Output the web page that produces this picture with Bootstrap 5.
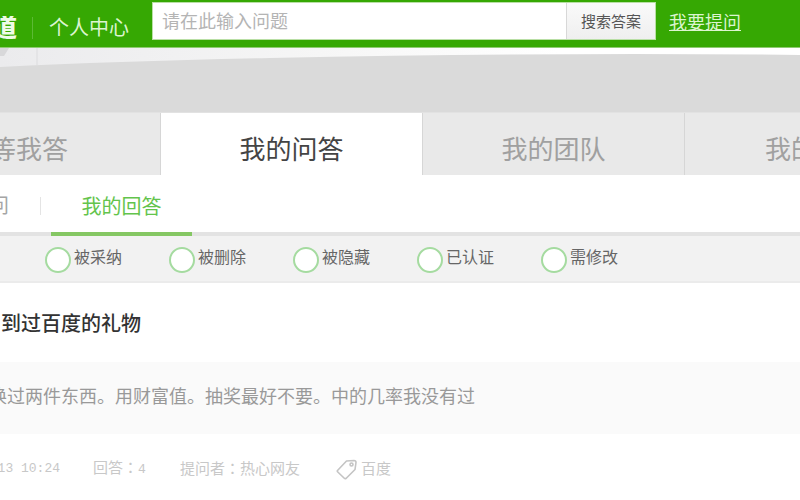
<!DOCTYPE html>
<html lang="zh-CN">
<head>
<meta charset="utf-8">
<meta name="viewport" content="width=device-width, initial-scale=1">
<title>个人中心</title>
<link href="https://cdn.jsdelivr.net/npm/bootstrap@5.3.0/dist/css/bootstrap.min.css" rel="stylesheet">
<style>
body { font-family: "Liberation Sans", "Noto Sans CJK SC", sans-serif; font-size: 16px; line-height: 24px; color: #333; overflow-x: hidden; }
.topbar { background: #36a803; height: 48px; border-bottom: 1px solid #8fcb72; }
.clip-start { display: flex; justify-content: flex-end; overflow: hidden; white-space: nowrap; flex: none; }
.brand-text { width: 17px; font-size: 24px; font-weight: 900; color: #effbe8; }
.brand-rule { width: 1px; height: 22px; background: #5cba35; margin: 0 16px 0 15px; }
.center-link { font-size: 20px; color: #dcf5cf; width: 103px; }
.title-group { padding-top: 8px; }
.search-group { width: 504px; height: 38px; flex: none; margin-top: 2px; border: 1px solid #b9dfa5; }
.search-group .form-control { font-size: 18px; line-height: 24px; padding: 2px 10px 0 9px; border: 0; }
.search-group .form-control::placeholder { color: #b4b4b4; }
.search-group .btn { width: 89px; font-size: 15px; line-height: 24px; padding: 2px 0 0; color: #555; border: 0; border-left: 1px solid #d8d8d8; background: linear-gradient(#fafafa, #efefef); }
.ask-link { font-size: 18px; color: #dcf5cf; margin: 11px 0 0 13px; }
.banner { height: 64px; background: #dadada; }
.banner svg { height: 20px; }
.main-tabs { height: 63px; background: #e9e9e9; border-top: 1px solid #e2e2e2; flex-wrap: nowrap; overflow: hidden; }
.main-tabs .nav-link { display: flex; align-items: center; justify-content: center; height: 63px; width: 262px; padding: 10px 0 0; font-size: 26px; line-height: 32px; color: #a0a0a0; border-right: 1px solid #d6d6d6; white-space: nowrap; }
.main-tabs .tab-first { width: 161px; justify-content: flex-end; padding-right: 92px; overflow: hidden; }
.main-tabs .tab-last { justify-content: flex-start; padding-left: 80px; border-right: 0; }
.main-tabs .active { background: #fff; color: #444; }
.sub-tabs { height: 61px; border-bottom: 4px solid #e3e3e3; padding-top: 4px; font-size: 20px; line-height: 24px; }
.sub-tabs a { color: #a5a5a5; text-decoration: none; }
.sub-first { width: 9px; }
.sub-rule { width: 1px; height: 18px; background: #e4e4e4; margin: 0 10px 0 31px; }
.sub-tabs .sub-current { color: #63c44c; width: 141px; height: 57px; line-height: 56px; text-align: center; border-bottom: 4px solid #85c763; align-self: flex-end; margin-bottom: -4px; }
.filters { height: 47px; background: #f2f2f2; border-bottom: 2px solid #ebebeb; padding-left: 45px; }
.filters .choice { display: flex; align-items: center; width: 124px; }
.filters .form-check-input { width: 26px; height: 26px; margin: 2px 3px 0 0; border: 2px solid #a5dba0; flex: none; }
.filters label { color: #666; font-size: 16px; white-space: nowrap; padding-bottom: 2px; }
.question-title { font-size: 20px; line-height: 28px; color: #333; padding: 27px 0 24px; margin: 0; }
.answer-box { background: #fafafa; color: #999; font-size: 18px; line-height: 24px; padding: 23px 0 25px; }
.clip-title { width: 141px; }
.clip-answer { width: 475px; }
.meta { color: #c8c8c8; font-size: 15px; line-height: 24px; padding-top: 22px; }
.meta-colon { font-family: "Noto Sans CJK TC", sans-serif; line-height: 1; }
.meta-num { font-family: "Liberation Mono", monospace; font-size: 13px; }
.meta-time { width: 60px; margin-right: 33px; }
.meta-count { width: 87px; }
.meta-user { width: 156px; }
.meta a { color: inherit; }
</style>
<script src="https://cdn.jsdelivr.net/npm/bootstrap@5.3.0/dist/js/bootstrap.bundle.min.js"></script>
</head>
<body class="bg-white">
<header class="topbar d-flex align-items-start">
  <div class="title-group d-flex align-items-center flex-shrink-0">
    <span class="clip-start brand-text">道</span>
    <span class="brand-rule"></span>
    <a href="#" class="center-link text-decoration-none py-2">个人中心</a>
  </div>
  <form class="search-group d-flex">
    <input type="text" class="form-control rounded-0 shadow-none" placeholder="请在此输入问题" aria-label="请在此输入问题">
    <button type="button" class="btn rounded-0 flex-shrink-0">搜索答案</button>
  </form>
  <a href="#" class="ask-link text-nowrap">我要提问</a>
</header>

<div class="banner">
  <svg class="w-100 d-block" viewBox="0 0 800 20" preserveAspectRatio="none" aria-hidden="true">
    <defs><linearGradient id="sky"><stop offset="0" stop-color="#ebebed"/><stop offset=".4" stop-color="#f6f6f6"/><stop offset=".7" stop-color="#fff"/></linearGradient></defs>
    <path d="M0 0H800V7Q560 4 270 10Q120 13 0 19Z" fill="url(#sky)"/>
    <path d="M0 0H9L4 8H0Z" fill="#d8d8da"/>
    <path d="M37 0V17" stroke="#dcdcde"/>
  </svg>
</div>

<nav class="nav main-tabs">
  <a href="#" class="nav-link tab-first flex-shrink-0">等我答</a>
  <a href="#" class="nav-link active flex-shrink-0" aria-current="page">我的问答</a>
  <a href="#" class="nav-link flex-shrink-0">我的团队</a>
  <a href="#" class="nav-link tab-last flex-grow-1 flex-shrink-0">我的</a>
</nav>

<nav class="sub-tabs d-flex align-items-center">
  <a href="#" class="clip-start sub-first">问</a>
  <span class="sub-rule"></span>
  <a href="#" class="sub-current">我的回答</a>
</nav>

<div class="filters d-flex">
  <div class="choice"><input class="form-check-input" type="radio" name="state" id="f1"><label for="f1">被采纳</label></div>
  <div class="choice"><input class="form-check-input" type="radio" name="state" id="f2"><label for="f2">被删除</label></div>
  <div class="choice"><input class="form-check-input" type="radio" name="state" id="f3"><label for="f3">被隐藏</label></div>
  <div class="choice"><input class="form-check-input" type="radio" name="state" id="f4"><label for="f4">已认证</label></div>
  <div class="choice"><input class="form-check-input" type="radio" name="state" id="f5"><label for="f5">需修改</label></div>
</div>

<main>
  <h2 class="question-title"><span class="clip-start clip-title">到过百度的礼物</span></h2>
  <div class="answer-box"><span class="clip-start clip-answer">换过两件东西。用财富值。抽奖最好不要。中的几率我没有过</span></div>
  <div class="meta d-flex align-items-center text-nowrap">
    <span class="clip-start meta-time meta-num">13 10:24</span>
    <span class="meta-count">回答<span class="meta-colon" lang="zh-TW">：</span><span class="meta-num">4</span></span>
    <span class="meta-user">提问者<span class="meta-colon" lang="zh-TW">：</span>热心网友</span>
    <a href="#" class="text-decoration-none d-flex align-items-center gap-1">
      <svg width="21" height="21" viewBox="0 0 21 21" fill="none" stroke="#c4c4c4" stroke-width="1.6" stroke-linejoin="round" aria-hidden="true"><path d="M1.5 11.5L10.5 2L18 1.5Q20 1.5 20 3.5L19 10.5L10 19.5Q9 20 8 19L1.8 13Q1 12.3 1.5 11.5Z"/><circle cx="15.5" cy="5.5" r="1.5"/></svg>
      <span>百度</span>
    </a>
  </div>
</main>
</body>
</html>
